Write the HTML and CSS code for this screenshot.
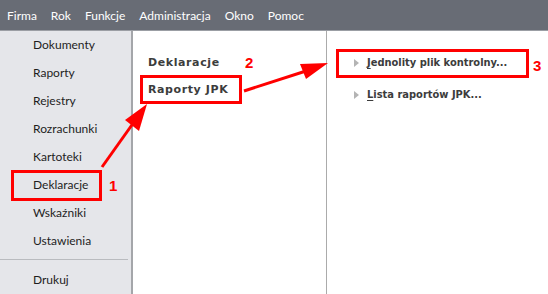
FILE: index.html
```html
<!DOCTYPE html>
<html>
<head lang="pl">
    <meta charset="UTF-8">
    <title>Deklaracje - Raporty JPK</title>
    <link rel="stylesheet" href="styles.css">
</head>
<body>
    <div id="menubar">
        <span class="menuItem">Firma</span>
        <span class="menuItem">Rok</span>
        <span class="menuItem">Funkcje</span>
        <span class="menuItem">Administracja</span>
        <span class="menuItem">Okno</span>
        <span class="menuItem">Pomoc</span>
    </div>
    <div id="main">
        <div id="sidebar">
            <div class="navItem">Dokumenty</div>
            <div class="navItem">Raporty</div>
            <div class="navItem">Rejestry</div>
            <div class="navItem">Rozrachunki</div>
            <div class="navItem">Kartoteki</div>
            <div class="navItem">Deklaracje</div>
            <div class="navItem">Wskaźniki</div>
            <div class="navItem">Ustawienia</div>
            <div class="navSep"></div>
            <div class="navItem">Drukuj</div>
        </div>
        <div id="groups">
            <div class="group">Deklaracje</div>
            <div class="group">Raporty JPK</div>
        </div>
        <div id="actions">
            <div class="action"><span class="arrow"></span><span><u>J</u>ednolity plik kontrolny...</span></div>
            <div class="action"><span class="arrow"></span><span><u>L</u>ista raportów JPK...</span></div>
        </div>
    </div>
    <svg id="marks" width="548" height="294" viewBox="0 0 548 294">
        <g fill="none" stroke="#f00" stroke-width="3">
            <rect x="12.5" y="171.5" width="88" height="28"/>
            <rect x="141.5" y="76.5" width="99" height="26"/>
            <rect x="337.5" y="50.5" width="190" height="26"/>
        </g>
        <g stroke="#f00" stroke-width="3">
            <line x1="102" y1="167" x2="134" y2="122"/>
            <line x1="244" y1="91" x2="306" y2="71"/>
        </g>
        <g fill="#f00">
            <polygon points="147,104 139,131 125,120"/>
            <polygon points="328,63 306,79 300,64"/>
        </g>
        <g fill="#f00" font-family="Liberation Sans, Arial, sans-serif" font-weight="bold" font-size="15">
            <text x="109" y="191">1</text>
            <text x="245" y="68">2</text>
            <text x="533" y="71">3</text>
        </g>
    </svg>
</body>
</html>
```

FILE: styles.css
```css
*{
    margin: 0px;
    padding: 0px;
    box-sizing: border-box;
}
body{
    width: 548px;
    height: 294px;
    overflow: hidden;
    position: relative;
    font-family: Lato, "Noto Sans", sans-serif;
    font-size: 12px;
    background: #fff;
}
#menubar{
    height: 31px;
    background: #686c75;
    border-bottom: 1px solid #9b9ea4;
    display: flex;
    align-items: center;
    padding-left: 7px;
    gap: 14px;
}
.menuItem{
    color: #fff;
}
#main{
    display: flex;
    height: 263px;
}
#sidebar{
    width: 133px;
    background: #e5e6ea;
    border-right: 2px solid #a4a6aa;
}
.navItem{
    height: 28px;
    line-height: 28px;
    padding-left: 33px;
    color: #1e1e1e;
}
.navSep{
    height: 1px;
    margin: 4px 3px 6px 0px;
    background: #b9bbbf;
}
#groups{
    width: 194px;
    border-right: 1px solid #ababab;
    padding-top: 18px;
    padding-left: 15px;
}
.group{
    font-family: "DejaVu Sans", sans-serif;
    font-weight: bold;
    font-size: 11px;
    letter-spacing: 0.6px;
    color: #3c3c3c;
    height: 27px;
    line-height: 27px;
}
.action{
    font-family: "DejaVu Sans Condensed", "DejaVu Sans", sans-serif;
    font-weight: bold;
    font-size: 11px;
    color: #3c3c3c;
    height: 32px;
    line-height: 24px;
    display: flex;
    align-items: flex-start;
    gap: 8px;
}
#actions{
    flex: 1;
    padding-top: 20px;
    padding-left: 27px;
}
.arrow{
    width: 0px;
    height: 0px;
    margin-top: 8px;
    border-left: 5px solid #b4b4b4;
    border-top: 4px solid transparent;
    border-bottom: 4px solid transparent;
}
u{
    text-decoration-thickness: 1px;
    text-underline-offset: 2px;
}
#marks{
    position: absolute;
    top: 0px;
    left: 0px;
}
```
